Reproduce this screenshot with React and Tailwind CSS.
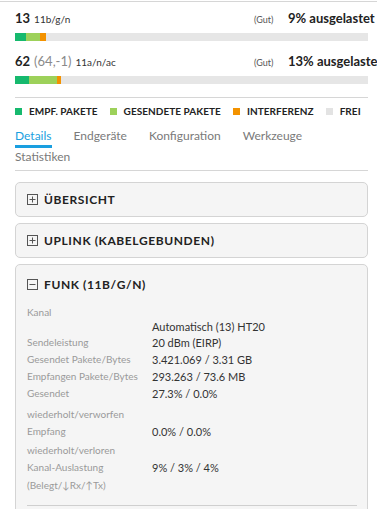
import React from "react";

const font = { fontFamily: "Lato, 'Open Sans', sans-serif" };

function Bar({ segs }) {
  return (
    <div className="mt-[4px] h-[8px] w-[353px] bg-[#e6e6e6] flex">
      {segs.map(([w, c], i) => (
        <div key={i} className={`h-full ${c}`} style={{ width: w }} />
      ))}
    </div>
  );
}

function BoxIcon({ minus }) {
  return (
    <svg width="11" height="11" viewBox="0 0 11 11" className="shrink-0">
      <rect x="0.5" y="0.5" width="10" height="10" fill="none" stroke="#555" strokeWidth="1" />
      <line x1="2.5" y1="5.5" x2="8.5" y2="5.5" stroke="#555" strokeWidth="1" />
      {!minus && <line x1="5.5" y1="2.5" x2="5.5" y2="8.5" stroke="#555" strokeWidth="1" />}
    </svg>
  );
}

function Legend({ color, label }) {
  return (
    <div className="flex items-center mr-[12px]">
      <div className={`w-[7px] h-[7px] ${color} mr-[7px]`} />
      <span className="text-[10px] font-bold text-[#222] leading-[14px] tracking-[0.05px]">{label}</span>
    </div>
  );
}

function Row({ label, value, valueTop = 0, h }) {
  return (
    <div className="flex items-start" style={h ? { height: h } : undefined}>
      <div className="w-[125px] text-[10px] text-[#9a9a9a] leading-[17px]">{label}</div>
      <div className="text-[11px] text-[#333] leading-[17px]" style={{ marginTop: valueTop }}>{value}</div>
    </div>
  );
}

export default function App() {
  return (
    <div className="w-[377px] h-[509px] overflow-hidden bg-white" style={font}>
      <div className="mt-px h-px bg-[#d6d6d6]" />
      <div className="pl-[15px]">
        {/* radio 1 */}
        <div className="mt-[7px] flex items-baseline h-[20px] whitespace-nowrap">
          <div className="w-[239px] shrink-0 flex items-baseline">
            <span className="text-[13px] font-bold text-[#222]">13</span>
            <span className="text-[10px] text-[#333] ml-[4px]">11b/g/n</span>
          </div>
          <span className="text-[9px] text-[#555] w-[34px] shrink-0">(Gut)</span>
          <span className="text-[13px] font-bold text-[#222]">9% ausgelastet</span>
        </div>
        <Bar segs={[[11, "bg-[#16b96e]"], [14, "bg-[#9dd15a]"], [6, "bg-[#f39200]"]]} />

        <div className="mt-[11px] flex items-baseline h-[20px] whitespace-nowrap">
          <div className="w-[239px] shrink-0 flex items-baseline">
            <span className="text-[13px] font-bold text-[#222]">62</span>
            <span className="text-[13px] text-[#8a8a8a] ml-[4px]">(64,-1)</span>
            <span className="text-[10px] text-[#333] ml-[4px]">11a/n/ac</span>
          </div>
          <span className="text-[9px] text-[#555] w-[34px] shrink-0">(Gut)</span>
          <span className="text-[13px] font-bold text-[#222]">13% ausgelastet</span>
        </div>
        <Bar segs={[[14, "bg-[#16b96e]"], [28, "bg-[#9dd15a]"], [4, "bg-[#f39200]"]]} />

        <div className="mt-[13px] h-px w-[353px] bg-[#d6d6d6]" />

        {/* legend */}
        <div className="mt-[6px] flex items-center h-[14px] whitespace-nowrap">
          <Legend color="bg-[#16b96e]" label="EMPF. PAKETE" />
          <Legend color="bg-[#9dd15a]" label="GESENDETE PAKETE" />
          <Legend color="bg-[#f39200]" label="INTERFERENZ" />
          <Legend color="bg-[#e3e3e3]" label="FREI" />
        </div>

        {/* tabs */}
        <div className="mt-[10px] w-[353px] flex flex-wrap text-[12px] leading-[16px]">
          <div className="mr-[22px] pb-[1px] border-b-[3px] border-[#1a9fe0] text-[#1a9fe0]">Details</div>
          <div className="mr-[22px] pb-[1px] border-b-[3px] border-transparent text-[#7a7a7a]">Endgeräte</div>
          <div className="mr-[22px] pb-[1px] border-b-[3px] border-transparent text-[#7a7a7a]">Konfiguration</div>
          <div className="mr-[22px] pb-[1px] border-b-[3px] border-transparent text-[#7a7a7a]">Werkzeuge</div>
          <div className="mr-[22px] pt-[1px] text-[#7a7a7a]">Statistiken</div>
        </div>
        <div className="mt-[5px] h-px w-[353px] bg-[#d6d6d6]" />

        {/* cards */}
        <div className="mt-[11px] w-[353px] flex flex-col gap-[6px]">
          <div className="h-[35px] rounded-[5px] border border-[#d4d4d4] bg-[#f5f5f5] flex items-center pl-[11px]">
            <BoxIcon />
            <span className="ml-[6px] text-[12px] font-bold text-[#222] tracking-[0.6px]">ÜBERSICHT</span>
          </div>
          <div className="h-[35px] rounded-[5px] border border-[#d4d4d4] bg-[#f5f5f5] flex items-center pl-[11px]">
            <BoxIcon />
            <span className="ml-[6px] text-[12px] font-bold text-[#222] tracking-[0.6px]">UPLINK (KABELGEBUNDEN)</span>
          </div>
          <div className="h-[260px] rounded-t-[5px] border border-[#d4d4d4] bg-[#f5f5f5]">
            <div className="h-[39px] flex items-center pl-[11px]">
              <BoxIcon minus />
              <span className="ml-[6px] text-[12px] font-bold text-[#222] tracking-[0.6px]">FUNK (11B/G/N)</span>
            </div>
            <div className="pl-[11px] pr-[10px]">
              <Row label="Kanal" value="Automatisch (13) HT20" valueTop={14} h={30} />
              <Row label="Sendeleistung" value="20 dBm (EIRP)" />
              <Row label="Gesendet Pakete/Bytes" value="3.421.069 / 3.31 GB" />
              <Row label="Empfangen Pakete/Bytes" value="293.263 / 73.6 MB" />
              <Row label={<><div>Gesendet</div><div className="mt-[4px]">wiederholt/verworfen</div></>} value="27.3% / 0.0%" />
              <Row label={<><div>Empfang</div><div className="mt-[2px]">wiederholt/verloren</div></>} value="0.0% / 0.0%" />
              <Row label={<><div>Kanal-Auslastung</div><div className="mt-[1px]">(Belegt/↓Rx/↑Tx)</div></>} value="9% / 3% / 4%" />
              <div className="mt-[11px] h-px bg-[#cfcfcf]" />
            </div>
          </div>
        </div>
      </div>
    </div>
  );
}
